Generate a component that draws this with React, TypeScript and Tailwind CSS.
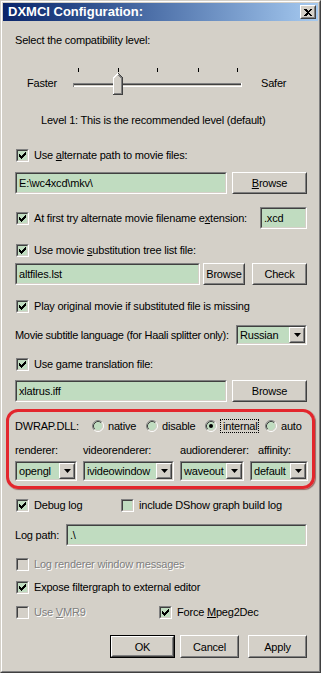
import React from 'react';

// classic win2k bevels
const sunkOuter = 'border border-t-[#808080] border-l-[#808080] border-r-white border-b-white';
const sunkInner = 'border border-t-[#404040] border-l-[#404040] border-r-[#d4d0c8] border-b-[#d4d0c8]';
const raisedOuter = 'border border-t-white border-l-white border-r-[#404040] border-b-[#404040]';
const raisedInner = 'border border-t-[#d4d0c8] border-l-[#d4d0c8] border-r-[#808080] border-b-[#808080]';

function Field({ value, className = '' }: { value: string; className?: string }) {
  return (
    <div className={`${sunkOuter} shrink-0 ${className}`}>
      <div className={`${sunkInner} h-full bg-[#c0dcc0] flex items-center pl-[2px] whitespace-nowrap overflow-hidden`}>{value}</div>
    </div>
  );
}

function Btn({ children, className = '', isDefault = false }: { children: React.ReactNode; className?: string; isDefault?: boolean }) {
  const inner = (
    <div className={`${raisedOuter} h-full`}>
      <div className={`${raisedInner} h-full flex items-center justify-center whitespace-nowrap`}>{children}</div>
    </div>
  );
  if (isDefault) return <div className={`border border-black shrink-0 ${className}`}>{inner}</div>;
  return <div className={`shrink-0 ${className}`}>{inner}</div>;
}

function CheckMark() {
  const cols = [2, 3, 4, 3, 2, 1, 0];
  return (
    <svg width="7" height="9" viewBox="0 0 7 9" shapeRendering="crispEdges">
      {cols.map((y, x) => (
        <rect key={x} x={x} y={y + 1} width="1" height="3" fill="#000" />
      ))}
    </svg>
  );
}

function Check({ checked = false, disabled = false }: { checked?: boolean; disabled?: boolean }) {
  return (
    <div className={`w-[13px] h-[13px] shrink-0 ${sunkOuter}`}>
      <div className={`w-full h-full ${sunkInner} flex items-center justify-center ${disabled ? 'bg-[#d4d0c8]' : 'bg-[#c0dcc0]'}`}>
        {checked && <CheckMark />}
      </div>
    </div>
  );
}

function Radio({ on = false }: { on?: boolean }) {
  return (
    <svg width="12" height="12" viewBox="0 0 12 12" className="shrink-0">
      <circle cx="6" cy="6" r="5" fill="#c0dcc0" />
      <path d="M2.11 9.89 A5.5 5.5 0 0 1 9.89 2.11" stroke="#808080" fill="none" />
      <path d="M9.89 2.11 A5.5 5.5 0 0 1 2.11 9.89" stroke="#fff" fill="none" />
      <path d="M2.82 9.18 A4.5 4.5 0 0 1 9.18 2.82" stroke="#404040" fill="none" />
      <path d="M9.18 2.82 A4.5 4.5 0 0 1 2.82 9.18" stroke="#d4d0c8" fill="none" />
      {on && <circle cx="6" cy="6" r="2" fill="#000" />}
    </svg>
  );
}

function Combo({ value, className = '' }: { value: string; className?: string }) {
  return (
    <div className={`${sunkOuter} h-[20px] shrink-0 ${className}`}>
      <div className={`${sunkInner} h-full bg-[#c0dcc0] flex items-center`}>
        <span className="flex-1 pl-[2px] whitespace-nowrap overflow-hidden">{value}</span>
        <div className={`${raisedOuter} w-[16px] h-full bg-[#d4d0c8]`}>
          <div className={`${raisedInner} h-full flex items-center justify-center`}>
            <svg width="7" height="4" viewBox="0 0 7 4">
              <path d="M0 0 H7 L3.5 4 Z" fill="#000" />
            </svg>
          </div>
        </div>
      </div>
    </div>
  );
}

const dis = 'text-[#808080] [text-shadow:1px_1px_0_#fff]';

function Slider() {
  const ticks = [8, 48, 87, 128, 167];
  return (
    <svg width="175" height="34" viewBox="0 0 175 34" shapeRendering="crispEdges" className="shrink-0">
      {ticks.map((x) => (
        <rect key={x} x={x} y="4" width="1" height="4" fill="#000" />
      ))}
      <rect x="3" y="19" width="169" height="1" fill="#808080" />
      <rect x="3" y="20" width="169" height="1" fill="#404040" />
      <rect x="3" y="21" width="169" height="1" fill="#d4d0c8" />
      <rect x="3" y="22" width="169" height="1" fill="#fff" />
      <rect x="3" y="19" width="1" height="4" fill="#808080" />
      <rect x="171" y="19" width="1" height="4" fill="#fff" />
      <polygon points="43,14 48,9 53,14 53,30 43,30" fill="#d4d0c8" />
      <polyline points="43.5,30 43.5,14 48,9.5" stroke="#fff" fill="none" />
      <polyline points="48.5,9.5 52.5,13.5 52.5,30.5 43,30.5" stroke="#404040" fill="none" />
      <polyline points="48.5,11 51.5,14 51.5,29.5 44,29.5" stroke="#808080" fill="none" />
    </svg>
  );
}

export default function App() {
  return (
    <div className="w-[321px] h-[673px] bg-[#d4d0c8] border border-t-[#d4d0c8] border-l-[#d4d0c8] border-r-[#404040] border-b-[#404040] font-['Liberation_Sans',Arial,sans-serif] text-[11px] leading-[14px] tracking-[-0.2px] text-black overflow-hidden">
      <div className="h-full border border-t-white border-l-white border-r-[#808080] border-b-[#808080] p-[1px] flex flex-col">
        {/* title bar */}
        <div className="h-[18px] shrink-0 bg-linear-to-r from-[#0a246a] to-[#a6caf0] flex items-center pl-[5px]">
          <span className="text-white font-bold text-[13px] tracking-normal">DXMCI Configuration:</span>
          <Btn className="ml-auto mr-[2px] w-[16px] h-[14px] bg-[#d4d0c8]">
            <svg width="8" height="7" viewBox="0 0 8 7" shapeRendering="crispEdges">
              <path d="M0 0h2l2 2 2-2h2L5 3.5 8 7H6L4 5 2 7H0l3-3.5z" fill="#000" />
            </svg>
          </Btn>
        </div>

        <div className="flex flex-col pr-[11px]">
          <div className="mt-[12px] h-[14px] pl-[12px] flex items-center">Select the compatibility level:</div>

          <div className="mt-[17px] h-[34px] pl-[24px] flex items-start">
            <span className="w-[43px] mt-[12px]">Faster</span>
            <Slider />
            <span className="ml-[16px] mt-[12px]">Safer</span>
          </div>

          <div className="mt-[15px] h-[14px] pl-[38px] flex items-center">Level 1: This is the recommended level (default)</div>

          <div className="mt-[21px] h-[14px] pl-[13px] flex items-center gap-[5px]">
            <Check checked />
            <span>Use <u>a</u>lternate path to movie files:</span>
          </div>

          <div className="mt-[10px] h-[22px] pl-[12px] flex">
            <Field value="E:\wc4xcd\mkv\" className="w-[212px]" />
            <Btn className="ml-[5px] w-[75px]"><span><u>B</u>rowse</span></Btn>
          </div>

          <div className="mt-[13px] h-[22px] pl-[13px] flex items-center gap-[5px]">
            <Check checked />
            <span>At first try alternate movie filename e<u>x</u>tension:</span>
            <Field value=".xcd" className="ml-auto w-[47px] h-full" />
          </div>

          <div className="mt-[14px] h-[14px] pl-[13px] flex items-center gap-[5px]">
            <Check checked />
            <span>Use movie <u>s</u>ubstitution tree list file:</span>
          </div>

          <div className="mt-[6px] h-[22px] pl-[12px] flex">
            <Field value="altfiles.lst" className="w-[185px]" />
            <Btn className="ml-[3px] w-[42px]">Browse</Btn>
            <Btn className="ml-[7px] w-[55px]">Check</Btn>
          </div>

          <div className="mt-[14px] h-[14px] pl-[13px] flex items-center gap-[5px]">
            <Check checked />
            <span>Play original movie if substituted file is missing</span>
          </div>

          <div className="mt-[12px] h-[20px] pl-[12px] flex items-center">
            <span className="whitespace-nowrap tracking-[-0.3px]">Movie subtitle language (for Haali splitter only):</span>
            <Combo value="Russian" className="ml-auto w-[71px]" />
          </div>

          <div className="mt-[12px] h-[14px] pl-[13px] flex items-center gap-[5px]">
            <Check checked />
            <span>Use game translation file:</span>
          </div>

          <div className="mt-[9px] h-[22px] pl-[12px] flex">
            <Field value="xlatrus.iff" className="w-[212px]" />
            <Btn className="ml-[5px] w-[75px]">Browse</Btn>
          </div>

          {/* highlighted DWRAP group */}
          <div className="mt-[7px] ml-[3px] mr-[-8px] h-[80px] border-[3px] border-[#e3262d] rounded-[12px] shadow-[1px_1px_1px_rgba(90,0,0,0.5)] pl-[6px] pr-[5px] flex flex-col">
            <div className="mt-[7px] h-[14px] flex items-center">
              <span className="w-[77px]">DWRAP.DLL:</span>
              <div className="w-[54px] flex items-center"><Radio /><span className="ml-[4px]">native</span></div>
              <div className="w-[59px] flex items-center"><Radio /><span className="ml-[4px]">disable</span></div>
              <div className="w-[60px] flex items-center">
                <Radio on />
                <span className="ml-[3px] pl-[2px] pr-[1px] border border-dotted border-black leading-[12px]">internal</span>
              </div>
              <div className="flex items-center"><Radio /><span className="ml-[4px]">auto</span></div>
            </div>
            <div className="mt-[10px] h-[14px] flex items-center whitespace-nowrap">
              <span className="w-[68px]">renderer:</span>
              <span className="w-[97px]">videorenderer:</span>
              <span className="w-[78px]">audiorenderer:</span>
              <span>affinity:</span>
            </div>
            <div className="mt-[4px] flex gap-[6px]">
              <Combo value="opengl" className="w-[62px]" />
              <Combo value="ivideowindow" className="w-[91px]" />
              <Combo value="waveout" className="w-[64px]" />
              <Combo value="default" className="w-[58px]" />
            </div>
          </div>

          <div className="mt-[9px] h-[14px] pl-[13px] flex items-center">
            <Check checked />
            <span className="ml-[5px] w-[87px]">Debug log</span>
            <Check />
            <span className="ml-[5px]">include DShow graph build log</span>
          </div>

          <div className="mt-[12px] h-[22px] pl-[12px] flex items-center">
            <span>Log path:</span>
            <Field value=".\" className="ml-auto w-[241px] h-full" />
          </div>

          <div className="mt-[11px] h-[14px] pl-[13px] flex items-center gap-[5px]">
            <Check disabled />
            <span className={dis}>Log renderer window messages</span>
          </div>

          <div className="mt-[9px] h-[14px] pl-[13px] flex items-center gap-[5px]">
            <Check checked />
            <span>Expose filtergraph to external editor</span>
          </div>

          <div className="mt-[11px] h-[14px] pl-[13px] flex items-center">
            <Check disabled />
            <span className={`ml-[5px] w-[125px] ${dis}`}>Use <u>V</u>MR9</span>
            <Check checked />
            <span className="ml-[5px]">Force <u>M</u>peg2Dec</span>
          </div>

          <div className="mt-[16px] h-[23px] flex">
            <Btn isDefault className="ml-[107px] w-[65px]">OK</Btn>
            <Btn className="ml-[5px] w-[59px]">Cancel</Btn>
            <Btn className="ml-[9px] w-[59px]">Apply</Btn>
          </div>
        </div>
      </div>
    </div>
  );
}
